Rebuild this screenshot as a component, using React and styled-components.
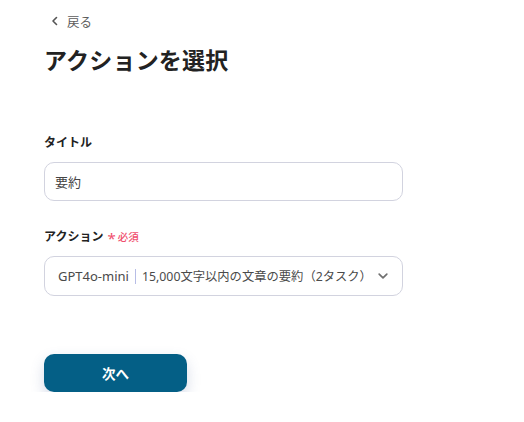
import styled, { createGlobalStyle } from "styled-components"

const GlobalStyle = createGlobalStyle`
  * { box-sizing: border-box; }
  body {
    margin: 0;
    background: #fff;
    font-family: "Noto Sans", "Noto Sans CJK JP", sans-serif;
    color: #2b2b2b;
  }
`

const Page = styled.div`
  padding: 10px 0 0 44px;
  width: 403px;
  box-sizing: content-box;
`

const Inner = styled.div`
  width: 359px;
  display: flex;
  flex-direction: column;
`

const BackLink = styled.a`
  display: flex;
  align-items: center;
  gap: 7px;
  height: 22px;
  padding-left: 6px;
  font-size: 12.5px;
  color: #5c5c5c;
  text-decoration: none;
  cursor: pointer;
`

const Title = styled.h1`
  margin: 11px 0 0;
  font-size: 23px;
  line-height: 34px;
  font-weight: 700;
  color: #222;
  letter-spacing: 0.2px;
`

const Field = styled.div`
  display: flex;
  flex-direction: column;
  gap: 10px;
  margin-top: ${(props) => props.$top}px;
`

const Label = styled.div`
  display: flex;
  align-items: center;
  gap: 4px;
  font-size: 12px;
  line-height: 18px;
  font-weight: 700;
  color: #222;
`

const Required = styled.span`
  display: flex;
  align-items: center;
  gap: 2px;
  font-size: 10.5px;
  font-weight: 500;
  color: #f0506e;

  b {
    font-size: 15px;
    font-weight: 400;
    line-height: 1;
    margin-top: 4px;
  }
`

const Box = styled.div`
  display: flex;
  align-items: center;
  height: ${(props) => props.$h}px;
  padding: 0 ${(props) => props.$pad}px;
  border: 1px solid #d2d3df;
  border-radius: 10px;
  font-size: 13px;
  color: #444;
  background: #fff;
  white-space: nowrap;

  svg {
    flex-shrink: 0;
  }
`

const Model = styled.span`
  color: #4a4a4a;
`

const Divider = styled.span`
  width: 1px;
  height: 15px;
  margin: 0 6px;
  background: #b7bde6;
`

const Option = styled.span`
  flex: 1;
  font-size: 12.3px;
  color: #4a4a4a;
`

const NextButton = styled.button`
  margin-top: 58px;
  width: 143px;
  height: 38px;
  border: none;
  border-radius: 10px;
  background: #045f86;
  color: #fff;
  font-family: inherit;
  font-size: 13.5px;
  font-weight: 700;
  box-shadow: 0 6px 14px rgba(70, 90, 150, 0.22);
  cursor: pointer;
`

const Chevron = ({ size = 10, color = "#666", dir = "down", weight = 1.6 }) => (
  <svg width={size} height={size} viewBox="0 0 10 10" fill="none">
    <path
      d={dir === "down" ? "M1.8 3.5 L5 6.6 L8.2 3.5" : "M6.5 1.5 L3 5 L6.5 8.5"}
      stroke={color}
      strokeWidth={weight}
      strokeLinecap="round"
      strokeLinejoin="round"
    />
  </svg>
)

const App = () => {
  return (
    <>
      <GlobalStyle />
      <Page>
        <Inner>
          <BackLink>
            <Chevron dir="left" color="#555" size={10} />
            戻る
          </BackLink>
          <Title>アクションを選択</Title>

          <Field $top={57}>
            <Label>タイトル</Label>
            <Box $h={39} $pad={10}>要約</Box>
          </Field>

          <Field $top={26}>
            <Label>
              アクション
              <Required>
                <b>*</b>必須
              </Required>
            </Label>
            <Box $h={40} $pad={13}>
              <Model>GPT4o-mini</Model>
              <Divider />
              <Option>15,000文字以内の文章の要約（2タスク）</Option>
              <Chevron color="#707070" size={12} weight={1.4} />
            </Box>
          </Field>

          <NextButton>次へ</NextButton>
        </Inner>
      </Page>
    </>
  )
}

export default App
